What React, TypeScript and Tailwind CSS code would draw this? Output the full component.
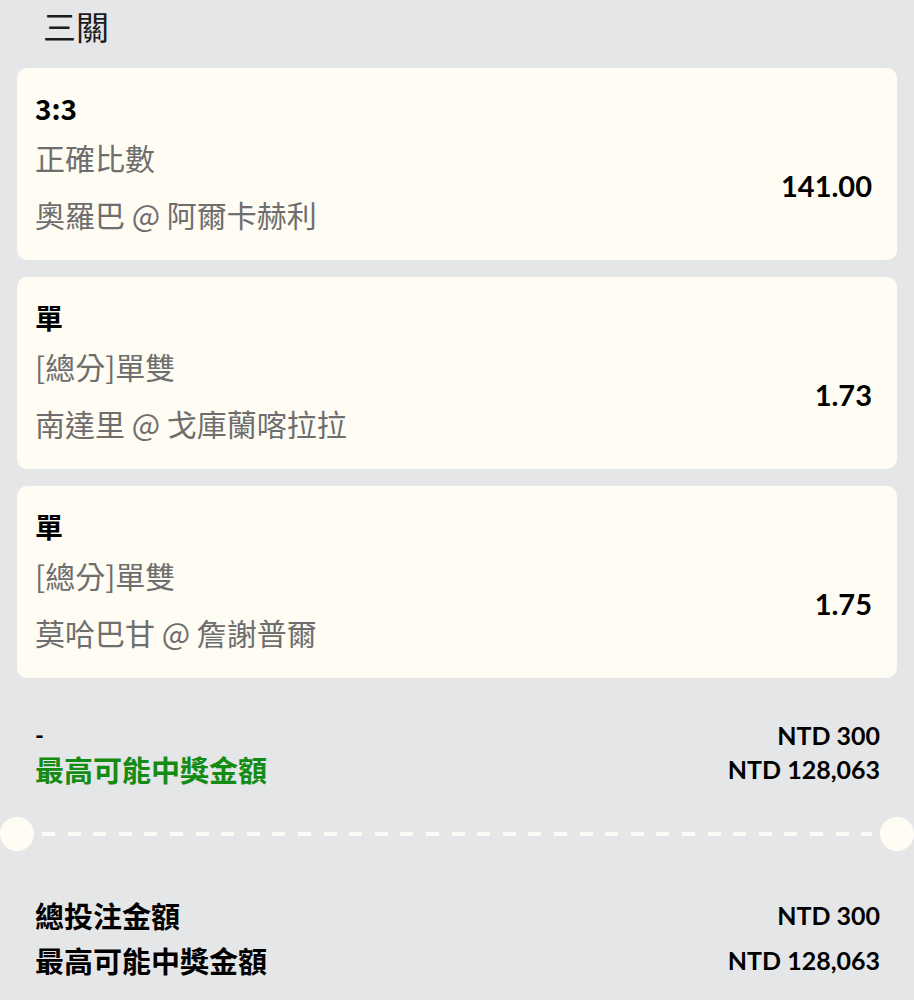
import React from "react";

const LATO = { fontFamily: 'Lato, "Noto Sans CJK TC", sans-serif' };
const CJK = { fontFamily: '"Noto Sans CJK TC", "Noto Sans", sans-serif' };

function Card({ title, market, match, odds }: { title: string; market: string; match: string; odds: string }) {
  return (
    <div className="flex h-[192px] flex-col rounded-[10px] bg-[#fffcf3] pl-[18px] pr-[25px] pt-[22px]" style={CJK}>
      <div className="text-[28px] font-semibold leading-[36px] text-black">{title}</div>
      <div className="mt-[11px] flex items-center justify-between">
        <div className="flex flex-col">
          <div className="text-[30px] leading-[40px] text-[#6e6e6e]">{market}</div>
          <div className="mt-[17px] text-[30px] leading-[40px] text-[#6e6e6e]">{match}</div>
        </div>
        <div className="text-[29px] font-bold leading-[36px] text-black" style={LATO}>{odds}</div>
      </div>
    </div>
  );
}

export default function App() {
  return (
    <div className="min-h-[1000px] w-[914px] overflow-hidden bg-[#e5e6e8]" style={CJK}>
      <div className="pl-[43px] pt-[3px] text-[33px] leading-[46px] text-[#1c1c1c]">三關</div>
      <div className="mt-[19px] flex flex-col gap-[17px] px-[17px]">
        <Card title="3:3" market="正確比數" match="奧羅巴 @ 阿爾卡赫利" odds="141.00" />
        <Card title="單" market="[總分]單雙" match="南達里 @ 戈庫蘭喀拉拉" odds="1.73" />
        <Card title="單" market="[總分]單雙" match="莫哈巴甘 @ 詹謝普爾" odds="1.75" />
      </div>
      <div className="mt-[40px] flex items-start justify-between pl-[35px] pr-[34px]">
        <div className="flex flex-col">
          <div className="text-[24px] font-bold leading-[34px] text-black" style={LATO}>-</div>
          <div className="text-[29px] font-bold leading-[34px] text-[#148c14]">最高可能中獎金額</div>
        </div>
        <div className="flex flex-col items-end" style={LATO}>
          <div className="text-[25px] font-bold leading-[34px] text-black">NTD 300</div>
          <div className="text-[25px] font-bold leading-[34px] text-black">NTD 128,063</div>
        </div>
      </div>
      <div className="relative mt-[31px] flex h-[34px] items-center">
        <div className="absolute left-0 top-0 h-[34px] w-[34px] rounded-full bg-[#fffcf3]" />
        <div className="ml-[42px] mr-[42px] h-[4px] flex-1 bg-[repeating-linear-gradient(90deg,#fcfbf6_0px,#fcfbf6_13px,transparent_13px,transparent_25.6px)]" />
        <div className="absolute right-0 top-0 h-[34px] w-[34px] rounded-full bg-[#fffcf3]" />
      </div>
      <div className="mt-[46px] flex items-start justify-between pl-[35px] pr-[34px]">
        <div className="flex flex-col gap-[9px]">
          <div className="text-[29px] font-bold leading-[36px] text-black">總投注金額</div>
          <div className="text-[29px] font-bold leading-[36px] text-black">最高可能中獎金額</div>
        </div>
        <div className="flex flex-col items-end gap-[9px]" style={LATO}>
          <div className="text-[25px] font-bold leading-[36px] text-black">NTD 300</div>
          <div className="text-[25px] font-bold leading-[36px] text-black">NTD 128,063</div>
        </div>
      </div>
    </div>
  );
}
